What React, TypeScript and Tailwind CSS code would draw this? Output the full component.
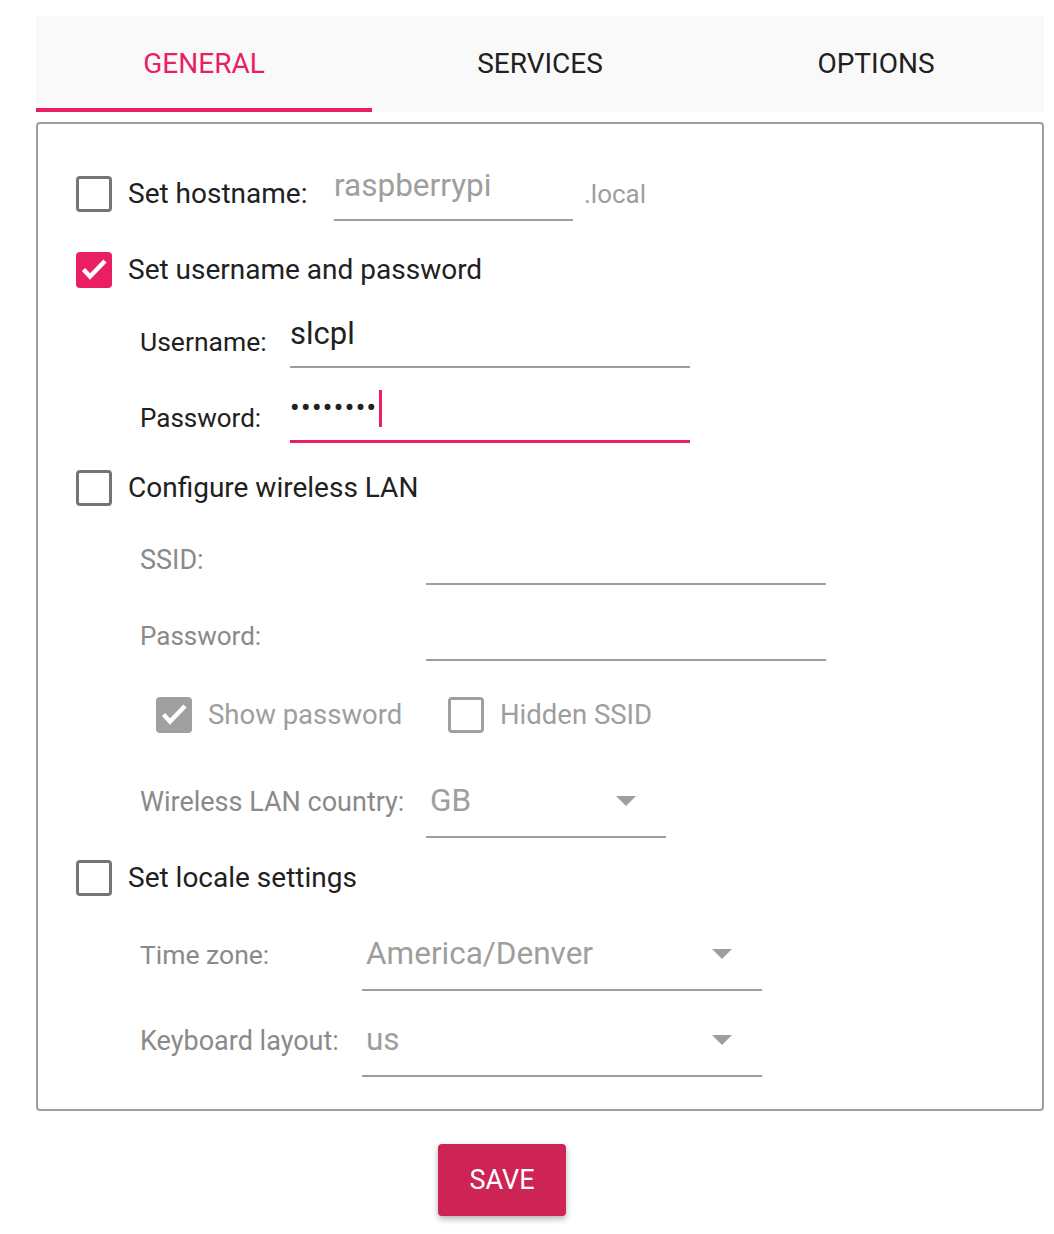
import React from "react";

type BoxState = "off" | "on" | "dimOn" | "dimOff";

const boxClass: Record<BoxState, string> = {
  off: "border-[3px] border-[#757575]",
  on: "bg-[#e91e63]",
  dimOn: "bg-[#a0a0a0]",
  dimOff: "border-[3px] border-[#a0a0a0]",
};

const CheckBox = ({ state }: { state: BoxState }) => {
  const checked = state === "on" || state === "dimOn";
  return (
    <div
      className={`w-[36px] h-[36px] shrink-0 rounded-[4px] flex items-center justify-center ${boxClass[state]}`}
    >
      {checked && (
        <svg width="36" height="36" viewBox="0 0 36 36">
          <polyline
            points="7.5,17.5 14,24.5 29,9"
            fill="none"
            stroke="white"
            strokeWidth="4.5"
          />
        </svg>
      )}
    </div>
  );
};

const Arrow = () => (
  <svg width="20" height="10" viewBox="0 0 20 10">
    <polygon points="0,0 20,0 10,10" fill="#9e9e9e" />
  </svg>
);

const CheckRow = ({
  state,
  label,
  className,
}: {
  state: BoxState;
  label: string;
  className: string;
}) => (
  <div className={`flex items-center ${className}`}>
    <CheckBox state={state} />
    <span className="ml-4 text-[28px] leading-none text-[#212121]">{label}</span>
  </div>
);

const Select = ({ value, width }: { value: string; width: string }) => (
  <div
    className={`${width} h-[72px] border-b-2 border-[#9e9e9e] flex items-center justify-between pl-[4px] pr-[30px]`}
  >
    <span className="text-[31.5px] leading-none text-[#9e9e9e]">{value}</span>
    <Arrow />
  </div>
);

export default function App() {
  const tabs = ["GENERAL", "SERVICES", "OPTIONS"];
  return (
    <div className="w-[1054px] min-h-[1234px] bg-white font-[Roboto,sans-serif] pt-4 pl-[36px]">
      <div className="w-[1008px]">
        {/* tab bar */}
        <div className="flex h-[96px] bg-[#f9f9f9]">
          {tabs.map((t, i) => (
            <div
              key={t}
              className={`flex-1 flex items-center justify-center pt-[3px] border-b-4 text-[28px] leading-none ${
                i === 0 ? "border-[#e91e63] text-[#e91e63]" : "border-transparent text-[#212121]"
              }`}
            >
              {t}
            </div>
          ))}
        </div>

        {/* general panel */}
        <div className="mt-[10px] border-2 border-[#9e9e9e] rounded-[4px] pt-[32px] pb-[23px] pl-[38px]">
          <div className="flex items-center h-[76px]">
            <CheckBox state="off" />
            <span className="ml-4 w-[206px] text-[28px] leading-none text-[#212121]">Set hostname:</span>
            <div className="w-[239px] h-[54px] border-b-2 border-[#9e9e9e] flex items-center pb-[14px]">
              <span className="text-[31.5px] leading-none text-[#9e9e9e]">raspberrypi</span>
            </div>
            <span className="ml-[11px] text-[26px] leading-none text-[#9e9e9e]">.local</span>
          </div>

          <CheckRow state="on" label="Set username and password" className="h-[76px]" />

          <div className="flex items-center h-[68px] pl-[64px]">
            <span className="w-[150px] text-[26.5px] leading-none text-[#212121]">Username:</span>
            <div className="w-[400px] h-[52px] border-b-2 border-[#9e9e9e] flex items-center pb-4">
              <span className="text-[31px] leading-none text-[#212121]">slcpl</span>
            </div>
          </div>

          <div className="flex items-center h-[84px] pl-[64px]">
            <span className="w-[150px] text-[26px] leading-none text-[#212121]">Password:</span>
            <div className="w-[400px] h-[50px] border-b-[3px] border-[#e91e63] flex items-center pb-4">
              <span className="text-[27px] leading-none tracking-[1.5px] font-medium text-[#212121]">••••••••</span>
              <span className="ml-[1px] w-[3px] h-[37px] shrink-0 bg-[#e91e63]" />
            </div>
          </div>

          <CheckRow state="off" label="Configure wireless LAN" className="h-[56px]" />

          <div className="flex items-center h-[88px] pl-[64px]">
            <span className="w-[286px] text-[27px] leading-none text-[#8a8a8a]">SSID:</span>
            <div className="w-[400px] h-[50px] border-b-2 border-[#9e9e9e]" />
          </div>

          <div className="flex items-center h-[64px] pl-[64px]">
            <span className="w-[286px] text-[26px] leading-none text-[#8a8a8a]">Password:</span>
            <div className="w-[400px] h-[50px] border-b-2 border-[#9e9e9e]" />
          </div>

          <div className="flex items-center h-[94px] pl-[80px]">
            <div className="w-[292px] flex items-center">
              <CheckBox state="dimOn" />
              <span className="ml-4 text-[27.5px] leading-none text-[#9e9e9e]">Show password</span>
            </div>
            <CheckBox state="dimOff" />
            <span className="ml-4 text-[27.5px] leading-none text-[#9e9e9e]">Hidden SSID</span>
          </div>

          <div className="flex items-center h-[80px] pl-[64px]">
            <span className="w-[286px] text-[27px] leading-none text-[#8a8a8a]">Wireless LAN country:</span>
            <Select value="GB" width="w-[240px]" />
          </div>

          <CheckRow state="off" label="Set locale settings" className="h-[72px]" />

          <div className="flex items-center h-[82px] pl-[64px]">
            <span className="w-[222px] text-[26.5px] leading-none text-[#8a8a8a]">Time zone:</span>
            <Select value="America/Denver" width="w-[400px]" />
          </div>

          <div className="flex items-center h-[90px] pl-[64px]">
            <span className="w-[222px] text-[27px] leading-none text-[#8a8a8a]">Keyboard layout:</span>
            <Select value="us" width="w-[400px]" />
          </div>
        </div>

        <button className="mt-[33px] ml-[402px] w-[128px] h-[72px] rounded-[4px] bg-[#cd2355] text-white text-[27px] leading-none shadow-[0_3px_6px_rgba(0,0,0,0.3)]">
          SAVE
        </button>
      </div>
    </div>
  );
}
